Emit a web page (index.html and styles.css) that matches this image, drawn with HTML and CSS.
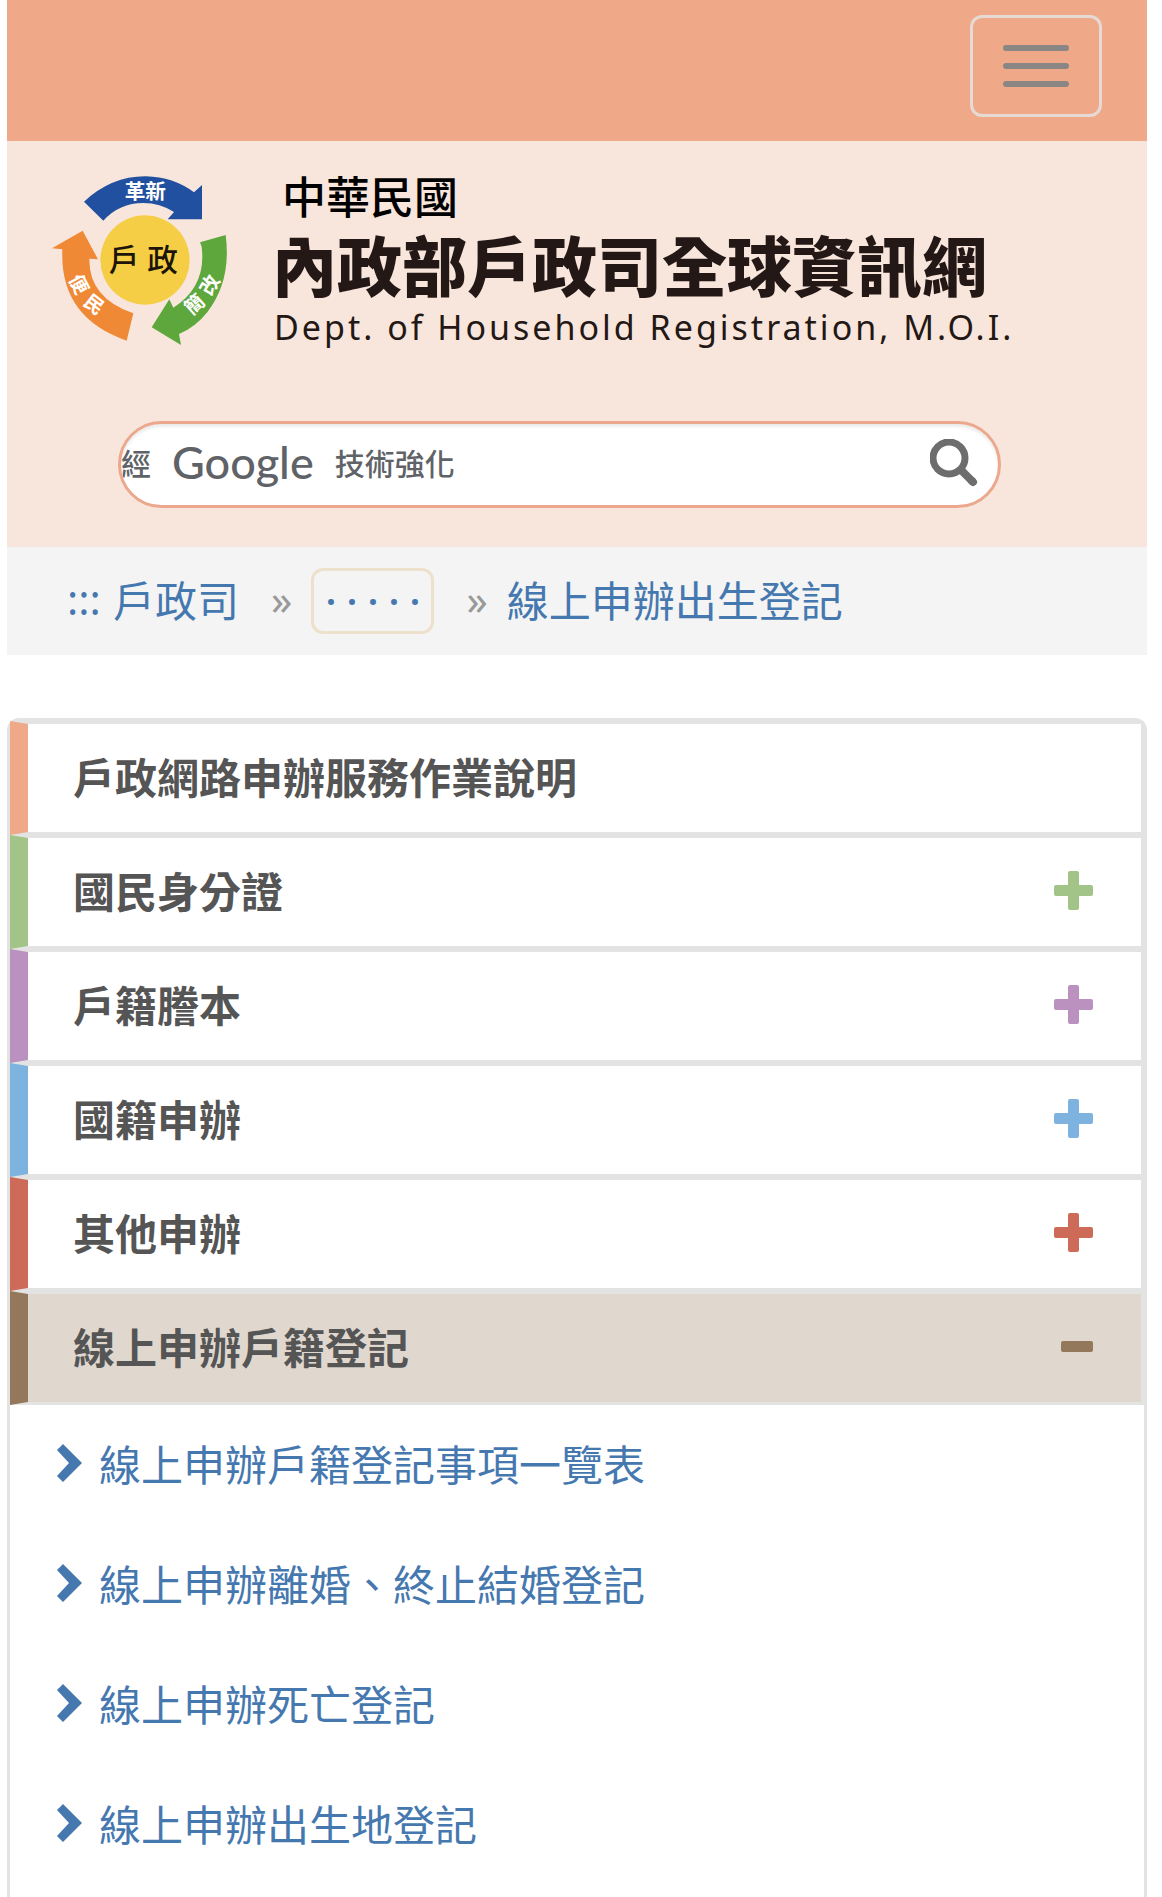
FILE: index.html
```html
<!DOCTYPE html>
<html lang="zh-Hant">
<head>
  <meta charset="UTF-8">
  <meta name="viewport" content="width=device-width, initial-scale=1.0">
  <title>線上申辦出生登記 - 內政部戶政司全球資訊網</title>
  <link rel="stylesheet" href="styles.css">
</head>
<body>

  <nav class="topbar">
    <button type="button" class="menu-toggle" aria-label="選單">
      <span></span>
      <span></span>
      <span></span>
    </button>
  </nav>

  <header>
    <a href="#" class="brand">
      <svg class="brand-logo" viewBox="150 135 540 516" aria-hidden="true">
        <path fill="#2150a0" d="M252 215Q335 138 438 139Q520 141 582 187L606 165V268H503L522 246Q480 219 430 219Q358 219 310 272Z"/>
        <path fill="#f08935" d="M248 302L294 388L268 386Q266 505 400 550L380 632Q178 562 187 358L156 355Z"/>
        <path fill="#5ea73d" d="M677 315Q695 450 623 545Q588 590 537 612L543 645L455 592L508 508L520 533Q620 470 605 350L600 337Z"/>
        <circle cx="435" cy="390" r="134" fill="#f5ce45"/>
        <g text-anchor="middle" fill="#fff" font-size="62" font-weight="700">
          <text x="436" y="207">革新</text>
          <text font-size="58" transform="translate(236 463) rotate(62)" y="20">便</text>
          <text font-size="58" transform="translate(282 524) rotate(38)" y="20">民</text>
          <text font-size="58" transform="translate(584 524) rotate(-42)" y="20">簡</text>
          <text font-size="58" transform="translate(630 465) rotate(-60)" y="20">改</text>
        </g>
        <g text-anchor="middle" fill="#1c1408" font-size="92" font-weight="500">
          <text x="372" y="424">戶</text>
          <text x="488" y="424">政</text>
        </g>
      </svg>
      <span class="brand-text">
        <span class="brand-country">中華民國</span>
        <span class="brand-name">內政部戶政司全球資訊網</span>
        <span class="brand-en">Dept. of Household Registration, M.O.I.</span>
      </span>
    </a>

    <form class="search">
      <label for="q" class="search-hint">經 <b>Google</b> 技術強化</label>
      <input type="text" id="q" name="q">
      <button type="submit" aria-label="搜尋">
        <svg viewBox="0 0 48 48" fill="none" stroke="#6d6d6d">
          <circle cx="19" cy="19" r="16" stroke-width="7"/>
          <path d="M30 30L43 43" stroke-width="8"/>
          <path d="M42 42L43 43" stroke-width="8" stroke-linecap="round"/>
        </svg>
      </button>
    </form>
  </header>

  <nav class="breadcrumb">
    <a href="#" class="access">:::</a>
    <a href="#">戶政司</a>
    <span class="sep">»</span>
    <a href="#" class="more"><i>·</i><i>·</i><i>·</i><i>·</i><i>·</i></a>
    <span class="sep">»</span>
    <a href="#">線上申辦出生登記</a>
  </nav>

  <main class="side-menu">
    <a href="#" class="item orange">戶政網路申辦服務作業說明</a>
    <a href="#" class="item green">國民身分證<svg class="icon" viewBox="0 0 39 39"><path d="M16 0h7q2 0 2 2v12h12q2 0 2 2v7q0 2-2 2H25v12q0 2-2 2h-7q-2 0-2-2V25H2q-2 0-2-2v-7q0-2 2-2h12V2q0-2 2-2z"/></svg></a>
    <a href="#" class="item purple">戶籍謄本<svg class="icon" viewBox="0 0 39 39"><path d="M16 0h7q2 0 2 2v12h12q2 0 2 2v7q0 2-2 2H25v12q0 2-2 2h-7q-2 0-2-2V25H2q-2 0-2-2v-7q0-2 2-2h12V2q0-2 2-2z"/></svg></a>
    <a href="#" class="item blue">國籍申辦<svg class="icon" viewBox="0 0 39 39"><path d="M16 0h7q2 0 2 2v12h12q2 0 2 2v7q0 2-2 2H25v12q0 2-2 2h-7q-2 0-2-2V25H2q-2 0-2-2v-7q0-2 2-2h12V2q0-2 2-2z"/></svg></a>
    <a href="#" class="item red">其他申辦<svg class="icon" viewBox="0 0 39 39"><path d="M16 0h7q2 0 2 2v12h12q2 0 2 2v7q0 2-2 2H25v12q0 2-2 2h-7q-2 0-2-2V25H2q-2 0-2-2v-7q0-2 2-2h12V2q0-2 2-2z"/></svg></a>
    <a href="#" class="item brown active">線上申辦戶籍登記<svg class="icon" viewBox="0 0 39 39"><rect x="7" y="14" width="32" height="11" rx="2"/></svg></a>

    <ul class="submenu">
      <li><a href="#"><svg class="chevron" viewBox="0 0 25 38"><path d="M6 0L25 19L6 38L0 32L12 19L0 6Z"/></svg>線上申辦戶籍登記事項一覽表</a></li>
      <li><a href="#"><svg class="chevron" viewBox="0 0 25 38"><path d="M6 0L25 19L6 38L0 32L12 19L0 6Z"/></svg>線上申辦離婚、終止結婚登記</a></li>
      <li><a href="#"><svg class="chevron" viewBox="0 0 25 38"><path d="M6 0L25 19L6 38L0 32L12 19L0 6Z"/></svg>線上申辦死亡登記</a></li>
      <li><a href="#"><svg class="chevron" viewBox="0 0 25 38"><path d="M6 0L25 19L6 38L0 32L12 19L0 6Z"/></svg>線上申辦出生地登記</a></li>
    </ul>
  </main>

</body>
</html>
```
FILE: styles.css
```css
:root {
  --main: #f0a988;
  --light: #f8e6dc;
  --link: #4678b0;
  --line: #e3e3e3;
}

* {
  box-sizing: border-box;
}

body {
  margin: 0 15px 0 7px;
  background: #fff;
  color: #555;
  font-family: "Noto Sans CJK TC", sans-serif;
  font-size: 42px;
  line-height: 60px;
}

a {
  color: var(--link);
  text-decoration: none;
}

.topbar {
  display: flex;
  justify-content: flex-end;
  padding: 15px 45px 24px;
  background: var(--main);
}

.menu-toggle {
  display: flex;
  flex-direction: column;
  align-items: center;
  justify-content: center;
  gap: 12px;
  width: 132px;
  height: 102px;
  padding: 0;
  background: none;
  border: 3px solid #e6dad4;
  border-radius: 12px;
}

.menu-toggle span {
  width: 66px;
  height: 6px;
  border-radius: 3px;
  background: #8a8683;
}

header {
  padding: 34px 0 39px;
  background: var(--light);
}

.brand {
  display: flex;
  gap: 42px;
  margin-left: 43px;
  color: #231815;
}

.brand-logo {
  flex: none;
  width: 180px;
  height: 172px;
}

.brand-text {
  display: flex;
  flex-direction: column;
  white-space: nowrap;
}

.brand-country {
  padding-left: 10px;
  font-size: 44px;
  font-weight: 500;
  line-height: 40px;
  color: #000;
}

.brand-name {
  font-size: 65px;
  font-weight: 900;
  line-height: 96px;
}

.brand-en {
  padding-left: 2px;
  font-family: "Noto Sans", sans-serif;
  font-size: 34px;
  line-height: 32px;
  letter-spacing: 3px;
}

.search {
  position: relative;
  display: flex;
  align-items: center;
  height: 87px;
  margin: 74px 146px 0 111px;
  overflow: hidden;
  background: #fff;
  border: 3px solid #eba88c;
  border-radius: 44px;
  box-shadow: inset 0 3px 3px rgba(0, 0, 0, 0.08);
}

.search-hint {
  position: absolute;
  left: 0;
  display: flex;
  align-items: center;
  gap: 21px;
  padding-bottom: 6px;
  color: #5f6368;
  font-size: 30px;
  font-weight: 500;
  pointer-events: none;
}

.search-hint b {
  font-family: Lato, sans-serif;
  font-size: 45px;
  font-weight: 500;
}

.search input {
  flex: 1;
  min-width: 0;
  height: 100%;
  padding: 0 30px;
  border: 0;
  outline: none;
  background: none;
  font: inherit;
}

.search button {
  display: flex;
  margin-right: 20px;
  padding: 0 0 4px;
  border: 0;
  background: none;
}

.search svg {
  width: 48px;
  height: 48px;
}

.breadcrumb {
  display: flex;
  align-items: center;
  height: 108px;
  padding: 0 60px 4px;
  background: #f4f4f4;
}

.access {
  width: 46px;
  font-family: "Noto Sans", sans-serif;
}

.sep {
  margin: 0 19px 0 32px;
  color: #999;
  font-family: "Noto Sans", sans-serif;
}

.more {
  display: flex;
  justify-content: center;
  width: 123px;
  height: 66px;
  margin-top: 4px;
  border: 3px solid #eee1cb;
  border-radius: 12px;
}

.more i {
  width: 21px;
  font-family: "Noto Sans", sans-serif;
  font-style: normal;
  font-weight: 500;
  text-align: center;
}

.side-menu {
  margin-top: 63px;
  padding-bottom: 12px;
  border: 3px solid var(--line);
  border-bottom: 0;
  border-radius: 12px 12px 0 0;
}

.item {
  display: flex;
  align-items: center;
  justify-content: space-between;
  height: 114px;
  padding: 0 48px 4px 45px;
  border: 3px solid var(--line);
  border-left-width: 18px;
  color: #555;
  font-weight: bold;
}

.icon {
  width: 39px;
  height: 39px;
}

.orange {
  border-left-color: #f0a988;
}

.green {
  border-left-color: #a2c488;
  fill: #a2c488;
}

.purple {
  border-left-color: #bb91bf;
  fill: #bb91bf;
}

.blue {
  border-left-color: #7db3de;
  fill: #7db3de;
}

.red {
  border-left-color: #ce6a58;
  fill: #ce6a58;
}

.brown {
  border-left-color: #94785c;
  fill: #94785c;
}

.active {
  background: #e0d8cf;
}

.submenu {
  margin: 0;
  padding: 0;
  list-style: none;
}

.submenu a {
  display: flex;
  align-items: center;
  gap: 17px;
  height: 120px;
  padding: 0 0 4px 47px;
}

.chevron {
  width: 25px;
  height: 38px;
  fill: var(--link);
}
```
